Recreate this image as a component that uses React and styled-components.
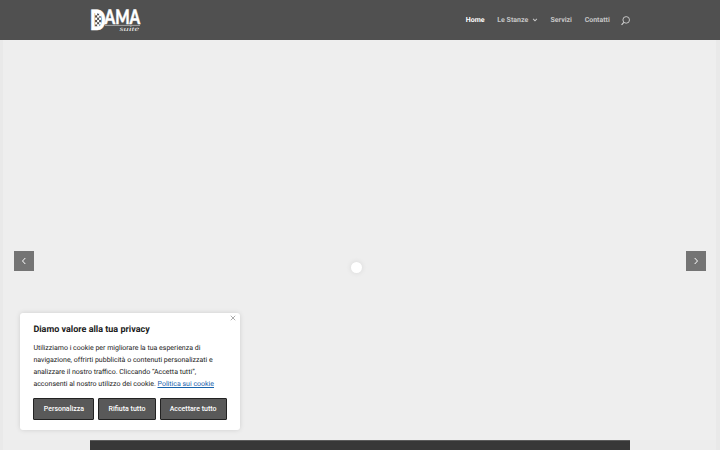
import React from "react";
import styled, { createGlobalStyle } from "styled-components";

const GlobalStyle = createGlobalStyle`
  * { box-sizing: border-box; }
  html, body { margin: 0; padding: 0; overflow: hidden; }
  body {
    font-family: Roboto, "Liberation Sans", sans-serif;
    background: #e9e9e9;
    text-rendering: geometricPrecision;
  }
  button { font-family: inherit; }
`;

const Page = styled.div`
  position: relative;
  height: 450px;
  display: flex;
  flex-direction: column;
  overflow: hidden;
`;

const Header = styled.header`
  height: 40px;
  flex: none;
  background: #505050;
  display: flex;
  justify-content: center;
`;

const HeaderInner = styled.div`
  width: 540px;
  display: flex;
  align-items: center;
  justify-content: space-between;
`;

const Logo = styled.svg`
  width: 54px;
  height: 28px;
  display: block;
  overflow: visible;
`;

const LogoLetter = styled.text`
  font-family: Lato, "Liberation Sans", sans-serif;
  font-weight: 900;
  font-size: ${(p) => p.$size}px;
  fill: #fff;
  stroke: #fff;
  stroke-width: 0.4px;
`;

const LogoScript = styled.text`
  font-family: "Liberation Serif", serif;
  font-style: italic;
  font-size: 6.8px;
  fill: #eee;
`;

const Nav = styled.nav`
  display: flex;
  align-items: center;
  gap: 12.7px;
`;

const NavLink = styled.a`
  display: flex;
  align-items: center;
  gap: 3.5px;
  font-size: 7px;
  line-height: 10px;
  font-weight: 700;
  white-space: nowrap;
  color: ${(p) => (p.$active ? "#ffffff" : "#c6c6c6")};
`;

const SearchIcon = styled.svg`
  width: 9px;
  height: 10px;
  display: block;
  margin: 2px 0 0 -1.5px;
`;

const Slider = styled.main`
  height: 400px;
  flex: none;
  margin: 0 4px 0 3px;
  padding: 42px 10px 0 10.5px;
  background: #eeeeee;
  display: flex;
  align-items: center;
  justify-content: space-between;
`;

const Arrow = styled.button`
  width: 20px;
  height: 20px;
  padding: 0;
  border: 0;
  background: #747474;
  display: flex;
  align-items: center;
  justify-content: center;
`;

const Loader = styled.div`
  width: 11px;
  height: 11px;
  margin: 13px 7px 0 0;
  border-radius: 50%;
  background: #fff;
  box-shadow: 0 0 5px 1px rgba(0, 0, 0, 0.07);
`;

const Lower = styled.section`
  flex: 1;
  margin: 0 4px 0 3px;
  background: #ededed;
  display: flex;
  justify-content: center;
`;

const Band = styled.div`
  width: 540px;
  margin-left: 1px;
  border-top: 1px solid #5c5c5c;
  background: #383838;
`;

const Consent = styled.aside`
  position: absolute;
  left: 20px;
  top: 313px;
  width: 220px;
  height: 117px;
  padding: 11px 13px 10px 13.4px;
  border-radius: 3px;
  background: #fff;
  box-shadow: 0 0 5px rgba(0, 0, 0, 0.13);
  color: #212121;
`;

const Close = styled.button`
  position: absolute;
  top: 2px;
  right: 4px;
  width: 6px;
  height: 6px;
  padding: 0;
  border: 0;
  background: none;
  display: flex;
`;

const Title = styled.h2`
  margin: 0;
  font-size: 9px;
  line-height: 12px;
  font-weight: 700;
`;

const Copy = styled.p`
  margin: 6px 0 7.6px;
  font-size: 7px;
  line-height: 12px;
  white-space: nowrap;
`;

const Policy = styled.a`
  color: #1863ac;
  text-decoration: underline;
`;

const Actions = styled.div`
  display: flex;
  gap: 3.6px;
`;

const Action = styled.button`
  width: ${(p) => p.$width}px;
  height: 22px;
  padding: 0;
  border: 1px solid #222;
  border-radius: 1px;
  background: #595959;
  color: #fff;
  font-size: 7px;
  font-weight: 500;
  line-height: 10px;
  white-space: nowrap;
`;

const checks = [
  [5.5, 6.8], [9.5, 7.8], [7.5, 9.1], [5.5, 11.4], [9.5, 11.4],
  [7.5, 13.7], [5.5, 16], [9.5, 16], [7.5, 18],
];

function DamaLogo() {
  return (
    <Logo viewBox="0 0 54 28" role="img" aria-label="Dama Suite">
      <LogoLetter $size={28} x="-0.2" y="23.6" textLength="16" lengthAdjust="spacingAndGlyphs">D</LogoLetter>
      {checks.map(([x, y]) => (
        <rect key={`${x}-${y}`} x={x - 0.4} y={y + 0.2} width="2" height="2.3" fill="#fff" />
      ))}
      <LogoLetter $size={20} x="14.5" y="17.8" textLength="35.7" lengthAdjust="spacingAndGlyphs">AMA</LogoLetter>
      <path d="M15 19.4H50" stroke="#c9c9c9" strokeWidth=".7" />
      <LogoScript x="29.5" y="25.1" textLength="19.5" lengthAdjust="spacingAndGlyphs">suite</LogoScript>
    </Logo>
  );
}

function Chevron({ d, size, color = "#fff", width = 1 }) {
  return (
    <svg width={size} height={size} viewBox="0 0 8 8" fill="none" stroke={color} strokeWidth={width}>
      <path d={d} />
    </svg>
  );
}

export default function App() {
  return (
    <>
      <GlobalStyle />
      <Page>
        <Header>
          <HeaderInner>
            <DamaLogo />
            <Nav>
              <NavLink $active>Home</NavLink>
              <NavLink>
                Le Stanze
                <Chevron d="M1.5 2.5L4 5L6.5 2.5" size={6} color="#c6c6c6" width={1.4} />
              </NavLink>
              <NavLink>Servizi</NavLink>
              <NavLink>Contatti</NavLink>
              <SearchIcon viewBox="0 0 9 10" fill="none" stroke="#d2d2d2">
                <circle cx="5.2" cy="3.9" r="3.3" strokeWidth=".9" />
                <path d="M2.8 6.4L.6 8.8" strokeWidth="1.2" />
              </SearchIcon>
            </Nav>
          </HeaderInner>
        </Header>
        <Slider>
          <Arrow aria-label="Precedente"><Chevron d="M5.3 1L2.5 4L5.3 7" size={8} /></Arrow>
          <Loader />
          <Arrow aria-label="Successivo"><Chevron d="M2.7 1L5.5 4L2.7 7" size={8} /></Arrow>
        </Slider>
        <Lower><Band /></Lower>
        <Consent>
          <Close aria-label="Chiudi"><Chevron d="M1 1L7 7M7 1L1 7" size={6} color="#909090" /></Close>
          <Title>Diamo valore alla tua privacy</Title>
          <Copy>
            Utilizziamo i cookie per migliorare la tua esperienza di<br />
            navigazione, offrirti pubblicità o contenuti personalizzati e<br />
            analizzare il nostro traffico. Cliccando “Accetta tutti”,<br />
            acconsenti al nostro utilizzo dei cookie. <Policy>Politica sui cookie</Policy>
          </Copy>
          <Actions>
            <Action $width={61}>Personalizza</Action>
            <Action $width={58}>Rifiuta tutto</Action>
            <Action $width={67}>Accettare tutto</Action>
          </Actions>
        </Consent>
      </Page>
    </>
  );
}
